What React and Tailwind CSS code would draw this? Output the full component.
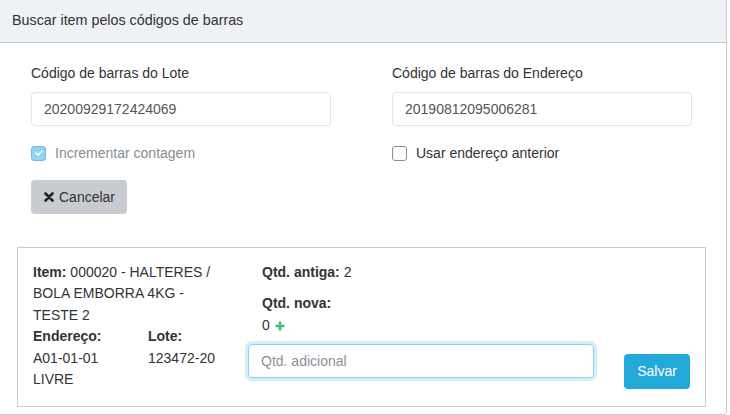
import { FaCheck } from 'react-icons/fa'

const font = { fontFamily: '"Liberation Sans", Arial, sans-serif' }

function Field({ label, value }) {
  return (
    <div className="flex flex-col">
      <label className="text-[14px] leading-[20px] text-[#333]">{label}</label>
      <input readOnly value={value}
        className="mt-[9px] h-[34px] w-[300px] rounded-[4px] border border-[#e1e4e8] bg-white px-[12px] text-[14px] text-[#555] outline-none" />
    </div>
  )
}

export default function App() {
  return (
    <div className="w-[730px] h-[415px] overflow-hidden bg-white" style={font}>
      <div className="w-[727px] h-[415px] border-r border-b border-[#c8ccd2] rounded-br-[4px]">
        <div className="h-[43px] bg-[#eef1f5] border-b border-[#c8ccd2] px-[12px] flex items-center">
          <span className="text-[14.3px] text-[#333]">Buscar item pelos códigos de barras</span>
        </div>

        <div className="pt-[20px] pl-[31px]">
          <div className="grid grid-cols-[300px_300px] gap-x-[61px]">
            <Field label="Código de barras do Lote" value="20200929172424069" />
            <Field label="Código de barras do Endereço" value="20190812095006281" />
            <div className="mt-[17px] flex items-center h-[20px]">
              <span className="w-[15px] h-[15px] rounded-[3px] bg-[#93d3ef] border border-[#6cc0e6] flex items-center justify-center">
                <FaCheck className="text-white w-[8px] h-[8px]" />
              </span>
              <span className="ml-[9px] text-[14px] text-[#888c92]">Incrementar contagem</span>
            </div>
            <div className="mt-[17px] flex items-center h-[20px]">
              <span className="w-[15px] h-[15px] rounded-[3px] bg-white border border-[#8a8f96]" />
              <span className="ml-[9px] text-[14px] text-[#333]">Usar endereço anterior</span>
            </div>
          </div>
          <button className="mt-[17px] h-[34px] w-[96px] rounded-[4px] bg-[#c8cbd0] text-[14px] text-[#333] flex items-center pl-[13px]">
            <svg viewBox="0 0 10 10" className="w-[10px] h-[10px] mr-[5px]">
              <path d="M1.5 1.5 L8.5 8.5 M8.5 1.5 L1.5 8.5" stroke="#222" strokeWidth="2.6" strokeLinecap="round" />
            </svg>
            Cancelar
          </button>
        </div>

        <div className="ml-[17px] mt-[33px] w-[689px] h-[160px] border border-[#c8ccd2] flex text-[14px] leading-[21.4px] text-[#333]">
          <div className="w-[230px] shrink-0 pl-[15px] pr-[30px] pt-[14px]">
            <div><b>Item:</b> 000020 - HALTERES / BOLA EMBORRA 4KG - TESTE 2</div>
            <div className="flex">
              <div className="w-[115px] shrink-0 pr-[30px]">
                <div><b>Endereço:</b></div>
                <div>A01-01-01 LIVRE</div>
              </div>
              <div className="whitespace-nowrap">
                <div><b>Lote:</b></div>
                <div>123472-20</div>
              </div>
            </div>
          </div>
          <div className="flex-1 pt-[14px]">
            <div className="pl-[14px]">
              <div><b>Qtd. antiga:</b> 2</div>
              <div className="mt-[10px]"><b>Qtd. nova:</b></div>
              <div className="flex items-center">
                0
                <svg viewBox="0 0 10 10" className="ml-[5px] w-[10px] h-[10px]">
                  <path d="M5 0.5 V9.5 M0.5 5 H9.5" stroke="#3dbb72" strokeWidth="2.4" />
                </svg>
              </div>
            </div>
            <div className="mt-[8px] flex items-start">
              <input placeholder="Qtd. adicional"
                className="h-[34px] w-[346px] rounded-[4px] border border-[#8ad2f0] px-[12px] text-[14px] text-[#555] placeholder:text-[#8c9097] outline-none shadow-[0_0_0_3px_#d2eef9]" />
              <button className="ml-[30px] mt-[10px] h-[35px] w-[66px] rounded-[4px] bg-[#22a9d9] text-white text-[14px]">Salvar</button>
            </div>
          </div>
        </div>
      </div>
    </div>
  )
}
